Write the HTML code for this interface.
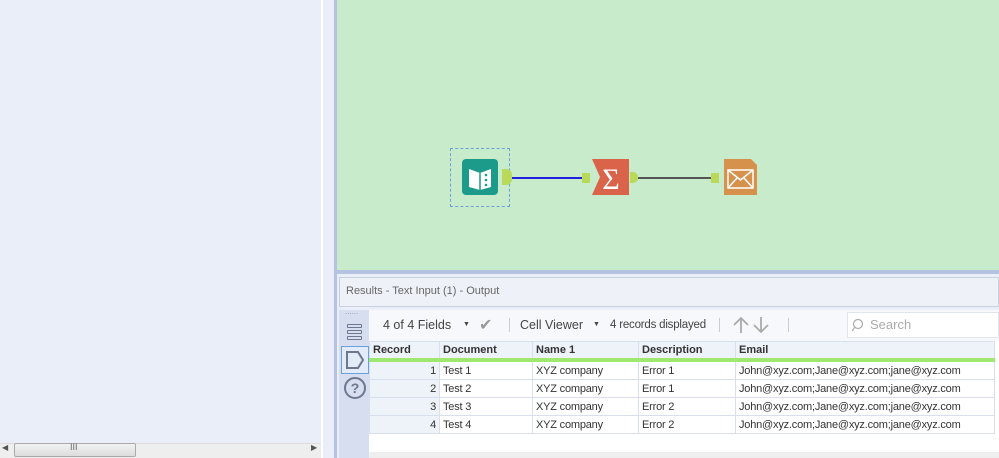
<!DOCTYPE html><html><head><style>
body{margin:0;width:999px;height:458px;position:relative;overflow:hidden;background:#e9eef8;font-family:"Liberation Sans",sans-serif;}
div{position:absolute;box-sizing:border-box;}
.t{font-size:12px;color:#444;white-space:nowrap}
td{border:1px solid #d8e0ee;padding:0 3px;height:17px;font-size:11px;color:#333;white-space:nowrap;letter-spacing:-0.2px}
th{border:1px solid #d8e0ee;border-bottom:4px solid #9ee86f;padding:0 3px;height:16px;font-size:11px;text-align:left;color:#333;background:#eef2f9}
</style></head><body>
<div style="left:0;top:0;width:321px;height:443px;background:#e9eef8"></div>
<div style="left:0;top:443px;width:321px;height:15px;background:#eeeeee;border-top:1px solid #ddd"></div>
<div style="left:14px;top:443px;width:122px;height:14px;background:linear-gradient(#f2f2f2,#dcdcdc);border:1px solid #aaa;border-radius:2px"></div>
<div class="t" style="left:70px;top:442px;font-size:9px;color:#666">III</div>
<div class="t" style="left:2px;top:443px;font-size:8px;color:#555">◀</div>
<div class="t" style="left:311px;top:443px;font-size:8px;color:#555">▶</div>
<div style="left:321px;top:0;width:2px;height:458px;background:#fff"></div>
<div style="left:323px;top:0;width:12px;height:458px;background:#e9eef8"></div>
<div style="left:334px;top:0;width:3px;height:458px;background:#b5c3e0"></div>
<div style="left:337px;top:0;width:662px;height:270px;background:#c8ebcb"></div>
<div style="left:337px;top:270px;width:662px;height:4px;background:#b5c3e0"></div>
<div style="left:450px;top:148px;width:60px;height:59px;border:1px dashed #6aa0d8"></div>
<div style="left:462px;top:159px;width:36px;height:36px;background:#1c9a8a;border-radius:4px"></div>
<svg style="position:absolute;left:462px;top:159px" width="36" height="36"><path d="M7 10 L18 14 L29 10 L29 28 L18 31 L7 28Z" fill="#fff"/><path d="M18 14 V31" stroke="#1c9a8a" stroke-width="1.5"/><circle cx="24" cy="16" r="1.3" fill="#1c9a8a"/><circle cx="24" cy="21" r="1.3" fill="#1c9a8a"/><circle cx="24" cy="26" r="1.3" fill="#1c9a8a"/></svg>
<div style="left:502px;top:169px;width:10px;height:16px;background:#b9d95a;border-radius:0 6px 6px 0"></div>
<div style="left:512px;top:177px;width:74px;height:2px;background:#2020e0"></div>
<div style="left:582px;top:173px;width:8px;height:10px;background:#b9d95a"></div>
<svg style="position:absolute;left:592px;top:159px" width="37" height="36"><path d="M0 0 H37 V36 H0 L8 18Z" fill="#d9644a"/><text x="19" y="30" font-size="30" fill="#fff" text-anchor="middle" font-family="Liberation Serif">Σ</text></svg>
<div style="left:630px;top:172px;width:8px;height:11px;background:#b9d95a;border-radius:0 5px 5px 0"></div>
<div style="left:638px;top:177px;width:74px;height:2px;background:#555"></div>
<div style="left:711px;top:173px;width:8px;height:10px;background:#b9d95a"></div>
<svg style="position:absolute;left:724px;top:159px" width="33" height="36"><path d="M0 0 H27 L33 6 V36 H0Z" fill="#d6914d"/><path d="M4 11 H29 V29 H4Z M4 11 L16.5 21 L29 11 M4 29 L13 19 M29 29 L20 19" fill="none" stroke="#fff" stroke-width="1.5"/></svg>
<div style="left:337px;top:274px;width:662px;height:184px;background:#e9eef8"></div>
<div style="left:339px;top:277px;width:660px;height:30px;background:#eef1f8;border:1px solid #c9cfdb"></div>
<div class="t" style="left:346px;top:285px;color:#666;font-size:11px">Results - Text Input (1) - Output</div>
<div style="left:339px;top:310px;width:30px;height:148px;background:#d6def0"></div>
<div class="t" style="left:345px;top:307px;font-size:8px;color:#999">......</div>
<div style="left:347px;top:324px;width:15px;height:4px;border:1.5px solid #6b7890;border-radius:1px"></div>
<div style="left:347px;top:330px;width:15px;height:4px;border:1.5px solid #6b7890;border-radius:1px"></div>
<div style="left:347px;top:336px;width:15px;height:4px;border:1.5px solid #6b7890;border-radius:1px"></div>
<div style="left:341px;top:346px;width:28px;height:28px;border:1px solid #6aa0e0;background:#e3eaf8"></div>
<svg style="position:absolute;left:345px;top:350px" width="20" height="20"><path d="M2 2 H13 L18 10 L13 18 H2Z" fill="none" stroke="#6b7890" stroke-width="2"/></svg>
<svg style="position:absolute;left:343px;top:376px" width="24" height="24"><circle cx="12" cy="12" r="10" fill="none" stroke="#6b7890" stroke-width="2"/><text x="12" y="17" font-size="14" text-anchor="middle" fill="#6b7890" font-family="Liberation Sans" font-weight="bold">?</text></svg>
<div style="left:369px;top:310px;width:630px;height:148px;background:#fff"></div>
<div style="left:369px;top:310px;width:630px;height:31px;background:#f6f8fc"></div>
<div class="t" style="left:383px;top:318px;font-size:12.5px">4 of 4 Fields</div>
<div class="t" style="left:463px;top:321px;font-size:7px">▼</div>
<div class="t" style="left:479px;top:315px;font-size:16px;color:#999">✔</div>
<div style="left:509px;top:318px;width:1px;height:14px;background:#ccc"></div>
<div class="t" style="left:520px;top:318px;font-size:12.5px">Cell Viewer</div>
<div class="t" style="left:593px;top:321px;font-size:7px">▼</div>
<div class="t" style="left:610px;top:319px;font-size:11.5px;letter-spacing:-0.2px">4 records displayed</div>
<div style="left:719px;top:318px;width:1px;height:14px;background:#ccc"></div>
<svg style="position:absolute;left:732px;top:316px" width="40" height="18"><path d="M9 17 V2 M2 9 L9 2 L16 9 M29 1 V16 M22 9 L29 16 L36 9" fill="none" stroke="#aaa" stroke-width="1.8"/></svg>
<div style="left:788px;top:318px;width:1px;height:14px;background:#ccc"></div>
<div style="left:847px;top:312px;width:152px;height:26px;background:#fff;border:1px solid #e0e4ec"></div>
<svg style="position:absolute;left:851px;top:318px" width="14" height="14"><circle cx="7" cy="6" r="4.5" fill="none" stroke="#aaa" stroke-width="1.2"/><path d="M4 9 L1 13" stroke="#aaa" stroke-width="1.2"/></svg>
<div class="t" style="left:870px;top:317px;font-size:13px;color:#aaa">Search</div>
<table style="position:absolute;left:369px;top:341px;border-collapse:collapse;width:626px">
<tr><th style="width:63px">Record</th><th style="width:86px">Document</th><th style="width:99px">Name 1</th><th style="width:90px">Description</th><th>Email</th></tr>
<tr><td style="text-align:right;background:#eef2f9">1</td><td>Test 1</td><td>XYZ company</td><td>Error 1</td><td>John@xyz.com;Jane@xyz.com;jane@xyz.com</td></tr>
<tr><td style="text-align:right;background:#eef2f9">2</td><td>Test 2</td><td>XYZ company</td><td>Error 1</td><td>John@xyz.com;Jane@xyz.com;jane@xyz.com</td></tr>
<tr><td style="text-align:right;background:#eef2f9">3</td><td>Test 3</td><td>XYZ company</td><td>Error 2</td><td>John@xyz.com;Jane@xyz.com;jane@xyz.com</td></tr>
<tr><td style="text-align:right;background:#eef2f9">4</td><td>Test 4</td><td>XYZ company</td><td>Error 2</td><td>John@xyz.com;Jane@xyz.com;jane@xyz.com</td></tr>
</table>
<div style="left:369px;top:452px;width:630px;height:6px;background:#eeeeee"></div>
</body></html>
